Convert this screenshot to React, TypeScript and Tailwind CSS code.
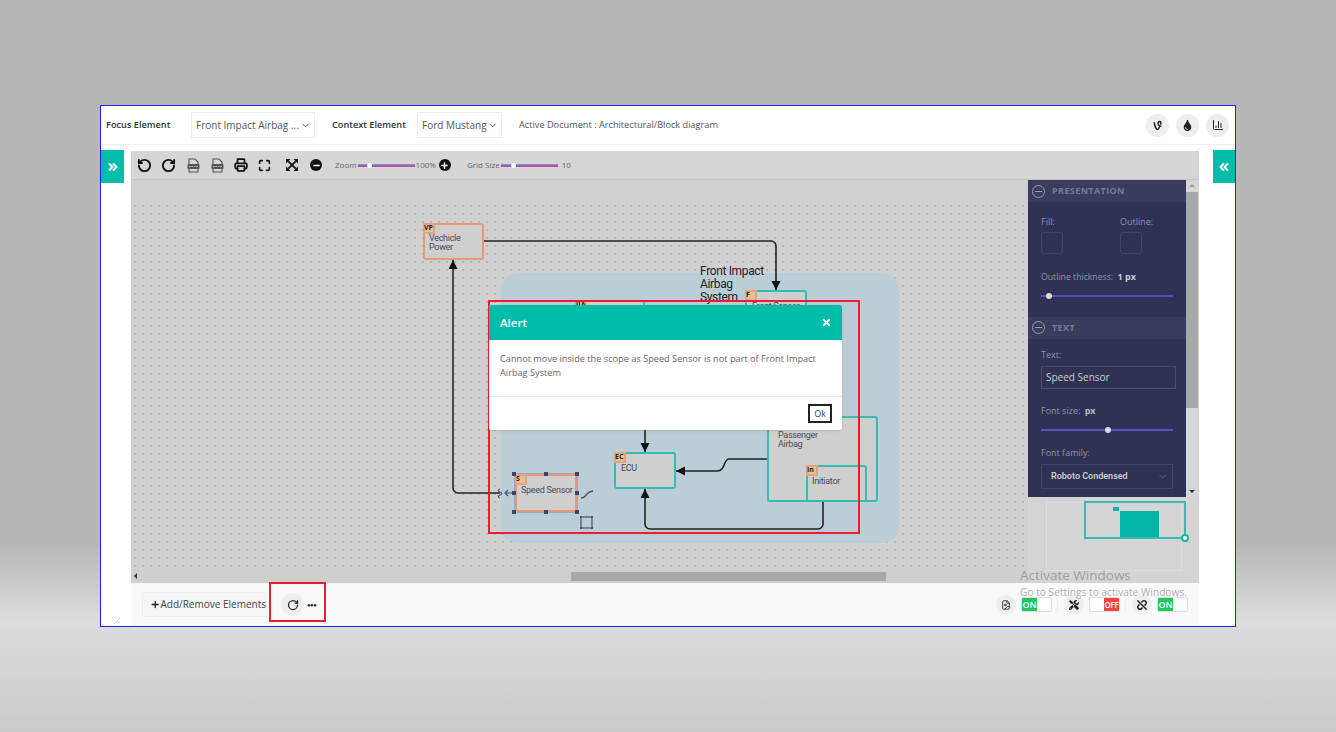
import type { ReactNode } from "react";
import { BarChart3, ChevronDown, ChevronsLeft, ChevronsRight, FileImage, Maximize, Minus, Plus, Printer, RotateCcw, RotateCw, X } from "lucide-react";
import { FaTint, FaTools, FaUnlink, FaVine } from "react-icons/fa";

function RoundIcon({ children, small }: { children: ReactNode; small?: boolean }) {
  return (
    <div className={`flex items-center justify-center rounded-full bg-[#eeeeee] text-[#222] ${small ? "h-[20px] w-[20px]" : "h-[23px] w-[23px]"}`}>
      {children}
    </div>
  );
}

function Toggle({ on }: { on: boolean }) {
  return (
    <div className="ml-[5px] flex h-[15px] w-[31px] justify-between overflow-hidden rounded-[2px] border border-[#dddddd] bg-white text-[9px] font-semibold leading-[13px] text-white">
      {on ? (
        <span className="w-[15px] bg-[#22c55e] text-center">ON</span>
      ) : (
        <>
          <span className="w-[14px]" />
          <span className="w-[15px] whitespace-nowrap bg-[#ef4444] text-center text-[8px] tracking-[-0.3px]">OFF</span>
        </>
      )}
    </div>
  );
}

function Tag({ label }: { label: string }) {
  return (
    <div className="absolute left-[-2px] top-[-2px] h-[11px] w-[12px] border-2 border-[#e8a27f] bg-[#e4c497] text-[7px] font-bold leading-[7px] text-[#222]">
      <div className="-ml-px -mt-px whitespace-nowrap">{label}</div>
    </div>
  );
}

type NodeProps = { x: number; y: number; w: number; h: number; label: string[]; tag?: string; orange?: boolean; textTop?: number; textLeft?: number };

function Node({ x, y, w, h, label, tag, orange, textTop = 10, textLeft = 4 }: NodeProps) {
  return (
    <div
      className={`absolute rounded-[3px] border-2 ${orange ? "border-[#e39a78]" : "border-[#35bdb3]"} bg-[#cfcfcf]`}
      style={{ left: x, top: y, width: w, height: h }}
    >
      {tag && <Tag label={tag} />}
      <div className="absolute whitespace-nowrap font-['Roboto',sans-serif] text-[9px] leading-[9px] tracking-[-0.3px] text-[#4a4a5e]" style={{ top: textTop, left: textLeft }}>
        {label.map((l) => (
          <div key={l}>{l}</div>
        ))}
      </div>
    </div>
  );
}

function Slider({ left }: { left: number }) {
  return (
    <div className="relative h-[3px] w-[57px] bg-[linear-gradient(#3fb5c5_33%,#d83fb0_33%)]">
      <div className="absolute top-[-1px] h-[5px] w-[5px] rounded-full bg-white" style={{ left }} />
    </div>
  );
}

function PanelSlider({ left }: { left: number }) {
  return (
    <div className="relative h-[2px] w-[132px] bg-[#5a4fc0]">
      <div className="absolute top-[-2px] h-[6px] w-[6px] rounded-full bg-[#dddddd]" style={{ left }} />
    </div>
  );
}

function PanelHead({ title }: { title: string }) {
  return (
    <div className="flex h-[22px] items-center gap-[7px] bg-[#3a3d5c] pl-[4px] text-[9px] font-bold tracking-[0.4px] text-[#777a9c]">
      <div className="flex h-[13px] w-[13px] items-center justify-center rounded-full border border-[#9a9cb0]">
        <div className="h-px w-[7px] bg-[#9a9cb0]" />
      </div>
      {title}
    </div>
  );
}

// small document icon with a dark band, used for the two export buttons
function SaveIcon() {
  return (
    <svg width="13" height="15" viewBox="0 0 13 15" fill="none">
      <path d="M2 1h6l3 3v10H2z" stroke="#555" strokeWidth="1.1" fill="#d6d6d6" />
      <rect x="0.5" y="6" width="12" height="5" rx="1" fill="#555" />
      <path d="M2 8.5h9" stroke="#ccc" strokeWidth="1.2" strokeDasharray="1.5 1" />
    </svg>
  );
}

function ExpandIcon() {
  return (
    <svg width="12" height="12" viewBox="0 0 13 13" fill="#111" stroke="#111">
      <path d="M2.5 2.5l8 8M10.5 2.5l-8 8" strokeWidth="2" />
      <path d="M0 0h5L0 5zM13 0H8l5 5zM0 13h5l-5-5zM13 13H8l5-5z" stroke="none" />
    </svg>
  );
}

function Diagram() {
  return (
    <div className="relative h-[390px] overflow-hidden bg-[#d0d0d0]">
      <div className="absolute inset-x-0 bottom-0 top-[22px] bg-[radial-gradient(circle,#9c9c9c_0.5px,transparent_0.9px)] bg-[size:8px_8px]" />
      {/* scope box */}
      <div className="absolute left-[370px] top-[93px] h-[270px] w-[398px] rounded-[18px] bg-[#bbced7]" />
      <div className="absolute left-[569px] top-[85px] w-[68px] font-['Roboto',sans-serif] text-[12px] leading-[13px] tracking-[-0.35px] text-[#222]">
        Front Impact Airbag System
      </div>

      <Node x={292} y={43} w={61} h={37} label={["Vechicle", "Power"]} tag="VP" orange textTop={9} />
      <Node x={614} y={110} w={62} h={30} label={["Front Sensor"]} tag="F" textLeft={5} />
      <Node x={444} y={120} w={70} h={30} label={[""]} tag="IIA" />
      <Node x={483} y={272} w={62} h={37} label={["ECU"]} tag="EC" textLeft={5} />
      <Node x={636} y={236} w={111} h={86} label={["Passenger", "Airbag"]} textTop={13} textLeft={9} />
      <Node x={675} y={285} w={61} h={37} label={["Initiator"]} tag="In" textLeft={4} />

      {/* selected node */}
      <div className="absolute left-[384px] top-[294px] h-[38px] w-[62px] border-2 border-[#e39a78] bg-[#cfcfcf] outline outline-1 outline-[#a0a8c0]">
        <Tag label="S" />
        <div className="absolute left-[4px] top-[10px] whitespace-nowrap font-['Roboto',sans-serif] text-[9px] leading-[9px] tracking-[-0.3px] text-[#4a4a5e]">
          Speed Sensor
        </div>
      </div>

      <svg className="absolute inset-0" width="897" height="390" fill="none">
        <defs>
          <marker id="arrow" markerUnits="userSpaceOnUse" markerWidth="9" markerHeight="10" refX="9" refY="4.5" orient="auto">
            <path d="M0 0L9 4.5L0 9z" fill="#111" />
          </marker>
        </defs>
        <g stroke="#222" strokeWidth="1.6">
          <path d="M353 61H640a5 5 0 0 1 5 5V110" markerEnd="url(#arrow)" />
          <path d="M369 313H327a5 5 0 0 1-5-5V80" markerEnd="url(#arrow)" />
          <path d="M514 250V272" markerEnd="url(#arrow)" />
          <path d="M636 279H598c-6 0-3 12-12 12H545" markerEnd="url(#arrow)" />
          <path d="M692 322V344a5 5 0 0 1-5 5H519a5 5 0 0 1-5-5V309" markerEnd="url(#arrow)" />
        </g>
        <g fill="#3c4468">
          {[[381, 292], [413, 292], [444, 292], [381, 311], [444, 311], [381, 330], [413, 330], [444, 330]].map(([x, y]) => (
            <rect key={`${x}-${y}`} x={x} y={y} width="4" height="4" />
          ))}
        </g>
        <g stroke="#4a5070" strokeWidth="1.5">
          <rect x="450" y="337" width="11" height="11" strokeWidth="1.2" />
          <path d="M450 318c4 0 4-2 6-4s3-3 6-3" />
          <path d="M369 309c-2 0-2 3 0 3s2 3 0 3-2 3 0 3M381 313h-7M377 310l-3 3 3 3" strokeWidth="1.2" />
        </g>
        <g fill="#4a5070">
          {[[449, 336], [460, 336], [449, 347], [460, 347]].map(([x, y]) => (
            <rect key={`${x}-${y}`} x={x} y={y} width="2" height="2" />
          ))}
        </g>
      </svg>

      {/* alert */}
      <div className="absolute left-[357px] top-[120px] h-[234px] w-[372px] border-2 border-[#ee1c2e]" />
      <div className="absolute left-[358px] top-[125px] h-[125px] w-[353px] rounded-[2px] bg-white font-['Open_Sans',sans-serif] shadow-sm">
        <div className="flex h-[35px] items-center justify-between rounded-t-[2px] bg-[#00bdaa] pl-[11px] pr-[10px] text-[11.5px] font-semibold text-white">
          Alert
          <X size={11} strokeWidth={4} />
        </div>
        <div className="h-[57px] border-b border-[#e8e8e8] px-[11px] pt-[12px] text-[9.2px] leading-[14px] text-[#666666]">
          Cannot move inside the scope as Speed Sensor is not part of Front Impact Airbag System
        </div>
        <div className="flex justify-end pr-[10px] pt-[7px]">
          <button className="h-[19px] w-[24px] border-2 border-[#222222] bg-white text-[9px] leading-none text-[#444444]">Ok</button>
        </div>
      </div>
    </div>
  );
}

function PropertyPanel() {
  return (
    <div className="flex w-[171px] flex-col bg-[#d4d4d4]">
      <div className="flex h-[317px]">
        <div className="w-[158px] bg-[#2f3255] text-[9px] text-[#8f91aa]">
          <PanelHead title="PRESENTATION" />
          <div className="flex gap-[46px] px-[13px] pt-[13px]">
            <div className="w-[33px]">
              Fill:
              <div className="mt-[3px] h-[22px] w-[22px] rounded-[3px] border border-[#41456a]" />
            </div>
            <div>
              Outline:
              <div className="mt-[3px] h-[22px] w-[22px] rounded-[3px] border border-[#41456a]" />
            </div>
          </div>
          <div className="px-[13px] pt-[16px]">
            <span className="text-[8.7px]">Outline thickness:</span> <b className="ml-[2px] text-[#cccccc]">1 px</b>
            <div className="mt-[11px]">
              <PanelSlider left={5} />
            </div>
          </div>
          <div className="mt-[20px]">
            <PanelHead title="TEXT" />
          </div>
          <div className="px-[13px] pt-[9px]">
            Text:
            <div className="mt-[5px] flex h-[23px] w-[135px] items-center border border-[#4a4e72] pl-[4px] text-[10px] text-[#cccccc]">Speed Sensor</div>
            <div className="mt-[15px]">
              Font size: <b className="ml-[2px] text-[#bbbbbb]">px</b>
            </div>
            <div className="mt-[11px]">
              <PanelSlider left={64} />
            </div>
            <div className="mt-[15px]">Font family:</div>
            <div className="mt-[5px] flex h-[25px] w-[132px] items-center justify-between border border-[#41456a] pl-[9px] pr-[4px] font-['Roboto',sans-serif] font-semibold text-[#cccccc]">
              Roboto Condensed
              <ChevronDown size={11} className="text-[#666a88]" />
            </div>
          </div>
        </div>
        <div className="relative w-[12px] bg-[#d6d6d6]">
          <div className="absolute left-[3px] top-[4px] h-0 w-0 border-x-[3px] border-b-[3px] border-x-transparent border-b-[#999999]" />
          <div className="absolute left-0 top-[12px] h-[216px] w-full bg-[#a8a8a8]" />
          <div className="absolute bottom-[4px] left-[3px] h-0 w-0 border-x-[3px] border-t-[3px] border-x-transparent border-t-[#333333]" />
        </div>
      </div>
      {/* minimap */}
      <div className="relative flex-1">
        <div className="absolute left-[18px] top-[5px] h-[69px] w-[136px] border border-[#dedede]" />
        <div className="absolute left-[56px] top-[4px] h-[38px] w-[102px] border-2 border-[#35bdb3]">
          <div className="absolute left-[27px] top-[4px] h-[4px] w-[6px] bg-[#00b5a8]" />
          <div className="absolute left-[34px] top-[8px] h-[26px] w-[39px] bg-[#00b5a8]" />
          <div className="absolute bottom-[-5px] right-[-5px] h-[8px] w-[8px] rounded-full border-2 border-[#1ab8ac] bg-white" />
        </div>
      </div>
    </div>
  );
}

export default function App() {
  return (
    <div className="flex h-[732px] w-[1336px] items-start justify-center bg-[linear-gradient(#b5b7b6_0%,#b5b7b6_74%,#dcdddc_85%,#c8c9c8_100%)] pt-[105px] font-['Open_Sans',sans-serif]">
      <div className="relative flex h-[522px] w-[1136px] flex-col border border-[#1f1fff] bg-white">
        {/* top bar */}
        <div className="flex h-[39px] items-center border-b border-[#eeeeee] pl-[5px] pr-[6px] text-[9.2px] text-[#333333]">
          <span className="w-[85px] whitespace-nowrap font-semibold">Focus Element</span>
          <div className="flex h-[26px] w-[124px] items-center justify-between whitespace-nowrap border border-[#eeeeee] pl-[4px] pr-[3px] text-[10px] text-[#555555]">
            Front Impact Airbag ...
            <ChevronDown size={11} />
          </div>
          <span className="ml-[17px] w-[85px] whitespace-nowrap font-semibold">Context Element</span>
          <div className="flex h-[26px] w-[85px] items-center justify-between whitespace-nowrap border border-[#eeeeee] pl-[4px] pr-[3px] text-[10px] text-[#555555]">
            Ford Mustang
            <ChevronDown size={11} />
          </div>
          <span className="ml-[17px] whitespace-nowrap text-[#555555]">Active Document : Architectural/Block diagram</span>
          <div className="ml-auto flex gap-[7px]">
            <RoundIcon><FaVine size={11} /></RoundIcon>
            <RoundIcon><FaTint size={11} /></RoundIcon>
            <RoundIcon><BarChart3 size={12} /></RoundIcon>
          </div>
        </div>

        <div className="flex flex-1 pt-[5px]">
          <div className="w-[30px]">
            <div className="flex h-[33px] w-[23px] items-center justify-center bg-[#00bdaa] text-white">
              <ChevronsRight size={14} strokeWidth={3.5} />
            </div>
          </div>

          <div className="mt-px flex w-[1068px] flex-col">
            {/* toolbar */}
            <div className="flex h-[29px] items-center border-b border-[#c4c4c4] bg-[#d6d6d6] pl-[6px] text-[#111111]">
              <RotateCcw size={15} strokeWidth={3} />
              <RotateCw size={15} strokeWidth={3} className="ml-[9px]" />
              <div className="ml-[11px]"><SaveIcon /></div>
              <div className="ml-[11px]"><SaveIcon /></div>
              <Printer size={14} strokeWidth={3} className="ml-[10px]" />
              <Maximize size={13} strokeWidth={3} className="ml-[10px]" />
              <div className="ml-[15px]"><ExpandIcon /></div>
              <div className="ml-[12px] flex h-[12px] w-[12px] items-center justify-center rounded-full bg-[#111111]">
                <Minus size={9} color="white" strokeWidth={4} />
              </div>
              <span className="ml-[13px] mr-px whitespace-nowrap text-[8px] text-[#666666]">Zoom</span>
              <Slider left={9} />
              <span className="ml-px whitespace-nowrap text-[8px] text-[#666666]">100%</span>
              <div className="ml-[3px] flex h-[12px] w-[12px] items-center justify-center rounded-full bg-[#111111]">
                <Plus size={9} color="white" strokeWidth={4} />
              </div>
              <span className="ml-[16px] mr-px whitespace-nowrap text-[8px] text-[#666666]">Grid Size</span>
              <Slider left={10} />
              <span className="ml-[4px] text-[8px] text-[#666666]">10</span>
            </div>

            <div className="flex">
              <div className="flex-1">
                <Diagram />
                {/* horizontal scrollbar */}
                <div className="relative h-[13px] bg-[#cfcfcf]">
                  <div className="absolute left-[3px] top-[3px] h-0 w-0 border-y-[3px] border-r-[3px] border-y-transparent border-r-[#333333]" />
                  <div className="absolute left-[440px] top-[2px] h-[9px] w-[315px] bg-[#a8a8a8]" />
                </div>
              </div>
              <PropertyPanel />
            </div>

            {/* bottom bar */}
            <div className="relative flex flex-1 items-center bg-[#f9f9f9] pl-[11px] pr-[11px]">
              <div className="flex h-[25px] w-[125px] items-center whitespace-nowrap rounded-[2px] border border-[#eeeeee] bg-[#f6f6f6] pl-[7px] text-[10px] text-[#444444]">
                <Plus size={11} strokeWidth={3} className="text-[#222222]" />
                Add/Remove Elements
              </div>
              <div className="ml-[14px] flex items-center gap-[3px]">
                <RoundIcon><RotateCw size={12} strokeWidth={2.5} /></RoundIcon>
                <span className="text-[6px] font-bold leading-none tracking-[-0.5px] text-[#222222]">●●●</span>
              </div>
              {/* red highlight around the refresh button */}
              <div className="absolute left-[138px] top-[-1px] h-[40px] w-[57px] border-2 border-[#ee1c2e]" />
              <div className="ml-auto flex items-center">
                <RoundIcon small><FileImage size={10} /></RoundIcon>
                <Toggle on />
                <div className="ml-[5px] mr-[6px] h-[16px] w-px bg-[#eeeeee]" />
                <RoundIcon small><FaTools size={10} /></RoundIcon>
                <Toggle on={false} />
                <div className="ml-[5px] mr-[6px] h-[16px] w-px bg-[#eeeeee]" />
                <RoundIcon small><FaUnlink size={10} /></RoundIcon>
                <Toggle on />
              </div>
            </div>
          </div>

          <div className="ml-[14px] flex h-[33px] w-[22px] items-center justify-center bg-[#00bdaa] text-white">
            <ChevronsLeft size={14} strokeWidth={3.5} />
          </div>
        </div>

        {/* resize grip */}
        <svg className="absolute bottom-px left-[12px]" width="8" height="8" stroke="#c5d9ec">
          <path d="M1 7L7 1M4 7L7 4" />
        </svg>

        {/* windows watermark */}
        <div className="pointer-events-none absolute left-[919px] top-[461px] whitespace-nowrap text-[#777777]/60">
          <div className="text-[13.5px] leading-[17px]">Activate Windows</div>
          <div className="mt-px text-[10.2px] leading-[14px]">Go to Settings to activate Windows.</div>
        </div>
      </div>
    </div>
  );
}
